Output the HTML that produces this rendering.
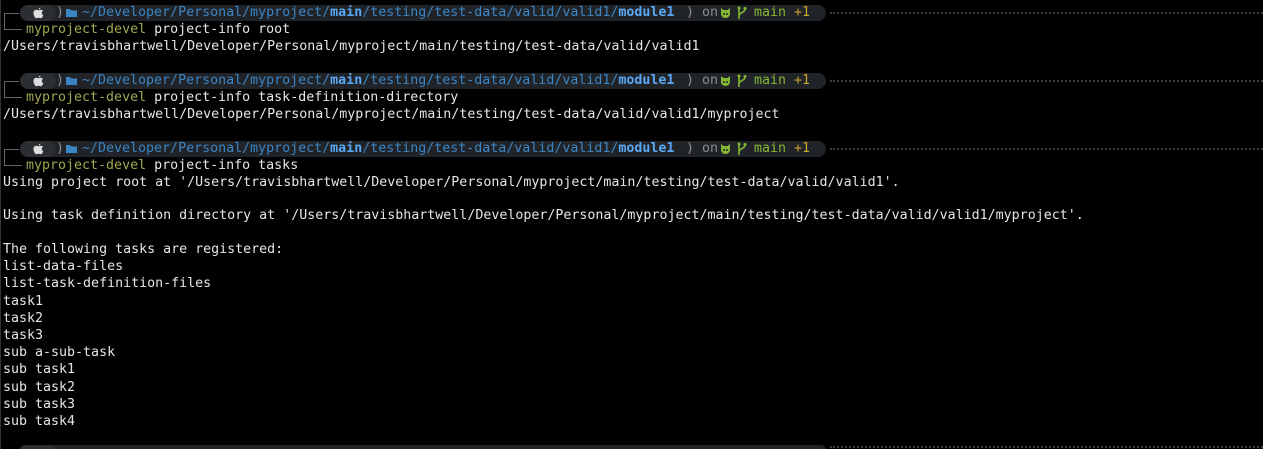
<!DOCTYPE html><html><head><style>
html,body{margin:0;overflow:hidden}
body{background:#000;width:1263px;height:449px;position:relative;font-family:"DejaVu Sans Mono","Liberation Mono",monospace;font-size:13.3px;color:#e6e6e6}
.l{position:absolute;left:3px;line-height:17px;white-space:pre}
.p{position:absolute;left:0;height:17px;width:1263px}
.bar{position:absolute;left:20px;top:1px;width:806px;height:16px;background:#202327;border-radius:8px}
.ap{position:absolute;left:20px;top:1px;width:36px;height:16px;background:#2b2e33;border-radius:8px}
.dots{position:absolute;left:830px;top:8px;width:433px;border-top:2px dotted #3a3d42}
.c{position:absolute;left:4px;top:9px;width:14px;height:16px;border:1px solid #666;border-right:none;border-bottom:none}
.c3{position:absolute;left:4px;top:25px;width:18px;border-top:1px solid #666}
.t{position:absolute;top:0;line-height:17px;white-space:pre}
.b{color:#3b85c4}.bb{color:#5aa8f5;font-weight:bold}
.g{color:#8c8c8c}.gr{color:#84b833}.y{color:#c9a52a}.ol{color:#a0a653}
svg{position:absolute}
</style></head><body>
<div class="p" style="top:4px"><div class="bar"></div><div class="ap"></div><div class="c"></div><div class="c3"></div><div class="dots"></div>
<svg style="left:33px;top:3px" width="11" height="12" viewBox="0 0 11 12"><path d="M7.5 0.5c0 1-0.8 2-1.8 2 0-1 0.8-2 1.8-2zM5.5 3.2c0.8 0 1.3-0.5 2.3-0.5 0.7 0 1.7 0.4 2.2 1.2-1.8 1-1.5 3.5 0.3 4.2-0.5 1.4-1.4 3.2-2.5 3.2-0.9 0-1.1-0.5-2.2-0.5s-1.4 0.5-2.2 0.5C2.3 11.3 0.5 8.6 0.5 6 0.5 3.9 1.8 2.7 3.2 2.7c1 0 1.6 0.5 2.3 0.5z" fill="#ddd"/></svg>
<span class="t g" style="left:56px">)</span>
<svg style="left:66px;top:5px" width="11" height="8"><path d="M0 0h4l1 1.5h6V8H0z" fill="#3b85c4"/></svg>
<span class="t b" style="left:82px">~/Developer/Personal/myproject/<span class="bb">main</span>/testing/test-data/valid/valid1/<span class="bb">module1</span></span>
<span class="t g" style="left:686px">) on</span>
<svg style="left:720px;top:4px" width="11" height="10"><path d="M1 0l2.5 2h4L10 0v6c0 2-2 4-4.5 4S1 8 1 6z" fill="#84b833"/><circle cx="4" cy="6" r="1" fill="#202327"/><circle cx="7" cy="6" r="1" fill="#202327"/></svg>
<svg style="left:737px;top:2px" width="10" height="14"><path d="M2 1v12M2 10c0-4 6-3 6-7" stroke="#84b833" stroke-width="1.6" fill="none"/><circle cx="2" cy="2" r="1.5" fill="#84b833"/><circle cx="8" cy="2.5" r="1.5" fill="#84b833"/></svg>
<span class="t gr" style="left:754px">main</span><span class="t y" style="left:794px">+1</span></div>
<div class="l" style="top:21px;left:26px"><span class="ol">myproject-devel</span> project-info root</div>
<div class="l" style="top:38px">/Users/travisbhartwell/Developer/Personal/myproject/main/testing/test-data/valid/valid1</div>

<div class="p" style="top:72px"><div class="bar"></div><div class="ap"></div><div class="c"></div><div class="c3"></div><div class="dots"></div>
<svg style="left:33px;top:3px" width="11" height="12" viewBox="0 0 11 12"><path d="M7.5 0.5c0 1-0.8 2-1.8 2 0-1 0.8-2 1.8-2zM5.5 3.2c0.8 0 1.3-0.5 2.3-0.5 0.7 0 1.7 0.4 2.2 1.2-1.8 1-1.5 3.5 0.3 4.2-0.5 1.4-1.4 3.200-2.5 3.2-0.9 0-1.1-0.5-2.2-0.5s-1.4 0.5-2.2 0.5C2.3 11.3 0.5 8.6 0.5 6 0.5 3.9 1.8 2.7 3.2 2.7c1 0 1.6 0.5 2.3 0.5z" fill="#ddd"/></svg>
<span class="t g" style="left:56px">)</span>
<svg style="left:66px;top:5px" width="11" height="8"><path d="M0 0h4l1 1.5h6V8H0z" fill="#3b85c4"/></svg>
<span class="t b" style="left:82px">~/Developer/Personal/myproject/<span class="bb">main</span>/testing/test-data/valid/valid1/<span class="bb">module1</span></span>
<span class="t g" style="left:686px">) on</span>
<svg style="left:720px;top:4px" width="11" height="10"><path d="M1 0l2.5 2h4L10 0v6c0 2-2 4-4.5 4S1 8 1 6z" fill="#84b833"/><circle cx="4" cy="6" r="1" fill="#202327"/><circle cx="7" cy="6" r="1" fill="#202327"/></svg>
<svg style="left:737px;top:2px" width="10" height="14"><path d="M2 1v12M2 10c0-4 6-3 6-7" stroke="#84b833" stroke-width="1.6" fill="none"/><circle cx="2" cy="2" r="1.5" fill="#84b833"/><circle cx="8" cy="2.5" r="1.5" fill="#84b833"/></svg>
<span class="t gr" style="left:754px">main</span><span class="t y" style="left:794px">+1</span></div>
<div class="l" style="top:89px;left:26px"><span class="ol">myproject-devel</span> project-info task-definition-directory</div>
<div class="l" style="top:106px">/Users/travisbhartwell/Developer/Personal/myproject/main/testing/test-data/valid/valid1/myproject</div>

<div class="p" style="top:140px"><div class="bar"></div><div class="ap"></div><div class="c"></div><div class="c3"></div><div class="dots"></div>
<svg style="left:33px;top:3px" width="11" height="12" viewBox="0 0 11 12"><path d="M7.5 0.5c0 1-0.8 2-1.8 2 0-1 0.8-2 1.8-2zM5.5 3.2c0.8 0 1.3-0.5 2.3-0.5 0.7 0 1.7 0.4 2.2 1.2-1.8 1-1.5 3.5 0.3 4.2-0.5 1.4-1.4 3.2-2.5 3.2-0.9 0-1.1-0.5-2.2-0.5s-1.4 0.5-2.2 0.5C2.3 11.3 0.5 8.6 0.5 6 0.5 3.9 1.8 2.7 3.2 2.7c1 0 1.6 0.5 2.3 0.5z" fill="#ddd"/></svg>
<span class="t g" style="left:56px">)</span>
<svg style="left:66px;top:5px" width="11" height="8"><path d="M0 0h4l1 1.5h6V8H0z" fill="#3b85c4"/></svg>
<span class="t b" style="left:82px">~/Developer/Personal/myproject/<span class="bb">main</span>/testing/test-data/valid/valid1/<span class="bb">module1</span></span>
<span class="t g" style="left:686px">) on</span>
<svg style="left:720px;top:4px" width="11" height="10"><path d="M1 0l2.5 2h4L10 0v6c0 2-2 4-4.5 4S1 8 1 6z" fill="#84b833"/><circle cx="4" cy="6" r="1" fill="#202327"/><circle cx="7" cy="6" r="1" fill="#202327"/></svg>
<svg style="left:737px;top:2px" width="10" height="14"><path d="M2 1v12M2 10c0-4 6-3 6-7" stroke="#84b833" stroke-width="1.6" fill="none"/><circle cx="2" cy="2" r="1.5" fill="#84b833"/><circle cx="8" cy="2.5" r="1.5" fill="#84b833"/></svg>
<span class="t gr" style="left:754px">main</span><span class="t y" style="left:794px">+1</span></div>
<div class="l" style="top:157px;left:26px"><span class="ol">myproject-devel</span> project-info tasks</div>
<div class="l" style="top:174px">Using project root at '/Users/travisbhartwell/Developer/Personal/myproject/main/testing/test-data/valid/valid1'.</div>
<div class="l" style="top:207px">Using task definition directory at '/Users/travisbhartwell/Developer/Personal/myproject/main/testing/test-data/valid/valid1/myproject'.</div>
<div class="l" style="top:241px;line-height:17.2px">The following tasks are registered:
list-data-files
list-task-definition-files
task1
task2
task3
sub a-sub-task
sub task1
sub task2
sub task3
sub task4</div>
<div style="position:absolute;left:20px;top:445px;width:806px;height:10px;background:#202327;border-radius:8px"></div>
<div style="position:absolute;left:20px;top:445px;width:36px;height:10px;background:#2b2e33;border-radius:8px"></div>
<div style="position:absolute;left:830px;top:446px;width:433px;border-top:2px dotted #3a3d42"></div>
<div style="position:absolute;left:0;top:0;width:1px;height:449px;background:#333"></div>
</body></html>
